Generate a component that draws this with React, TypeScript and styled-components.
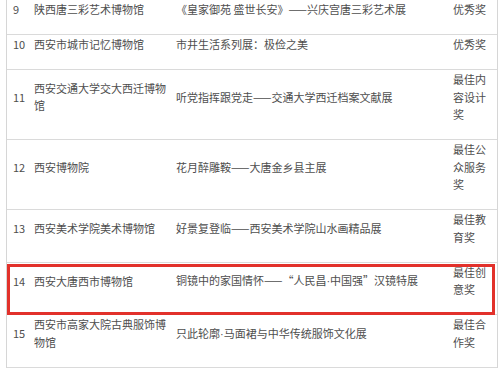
import React from "react";
import styled, { createGlobalStyle } from "styled-components";

const Global = createGlobalStyle`
  html, body {
    margin: 0;
    padding: 0;
    background: #ffffff;
  }
  body {
    font-family: "Noto Sans CJK SC", "Noto Sans", sans-serif;
  }
`;

const Page = styled.div`
  width: 500px;
  height: 374px;
  overflow: hidden;
  background: #ffffff;
`;

const Table = styled.div`
  margin-left: 6px;
  width: 490px;
  border-left: 1px solid #d6d6d6;
  border-right: 1px solid #d6d6d6;
  font-size: 11px;
  line-height: 17.6px;
  color: #4e4e4e;
`;

const Row = styled.div<{ $highlight?: boolean }>`
  position: relative;
  display: grid;
  grid-template-columns: 23px 142px 277px 48px;
  border-bottom: 1px solid #dadada;

  ${(p) =>
    p.$highlight &&
    `
    &::after {
      content: "";
      position: absolute;
      top: 1px;
      left: 0;
      right: 2px;
      bottom: -1px;
      border: 3px solid #e2312b;
      pointer-events: none;
    }
  `}
`;

const Cell = styled.div`
  display: block;
  align-self: center;
  padding: 1px 0 15.4px 4px;
  min-width: 0;
`;

const Num = styled(Cell)`
  padding-left: 6px;
`;

const Award = styled(Cell)`
  padding-right: 4px;
`;

const Dot = styled.span`
  font-family: "Liberation Sans", sans-serif;
`;

type Item = {
  n: number;
  name: string;
  show: string;
  award: string;
  hl?: boolean;
};

const items: Item[] = [
  { n: 9, name: "陕西唐三彩艺术博物馆", show: "《皇家御苑 盛世长安》——兴庆宫唐三彩艺术展", award: "优秀奖" },
  { n: 10, name: "西安市城市记忆博物馆", show: "市井生活系列展：极俭之美", award: "优秀奖" },
  { n: 11, name: "西安交通大学交大西迁博物馆", show: "听党指挥跟党走——交通大学西迁档案文献展", award: "最佳内容设计奖" },
  { n: 12, name: "西安博物院", show: "花月醉雕鞍——大唐金乡县主展", award: "最佳公众服务奖" },
  { n: 13, name: "西安美术学院美术博物馆", show: "好景复登临——西安美术学院山水画精品展", award: "最佳教育奖" },
  { n: 14, name: "西安大唐西市博物馆", show: "铜镜中的家国情怀——“人民昌·中国强”汉镜特展", award: "最佳创意奖", hl: true },
  { n: 15, name: "西安市高家大院古典服饰博物馆", show: "只此轮廓·马面裙与中华传统服饰文化展", award: "最佳合作奖" },
];

function withDots(text: string) {
  const parts = text.split("·");
  return parts.map((part, i) => (
    <React.Fragment key={i}>
      {i > 0 && <Dot>·</Dot>}
      {part}
    </React.Fragment>
  ));
}

export default function App() {
  return (
    <Page>
      <Global />
      <Table>
        {items.map((it) => (
          <Row key={it.n} $highlight={it.hl}>
            <Num>{it.n}</Num>
            <Cell>{it.name}</Cell>
            <Cell>{withDots(it.show)}</Cell>
            <Award>{it.award}</Award>
          </Row>
        ))}
      </Table>
    </Page>
  );
}
